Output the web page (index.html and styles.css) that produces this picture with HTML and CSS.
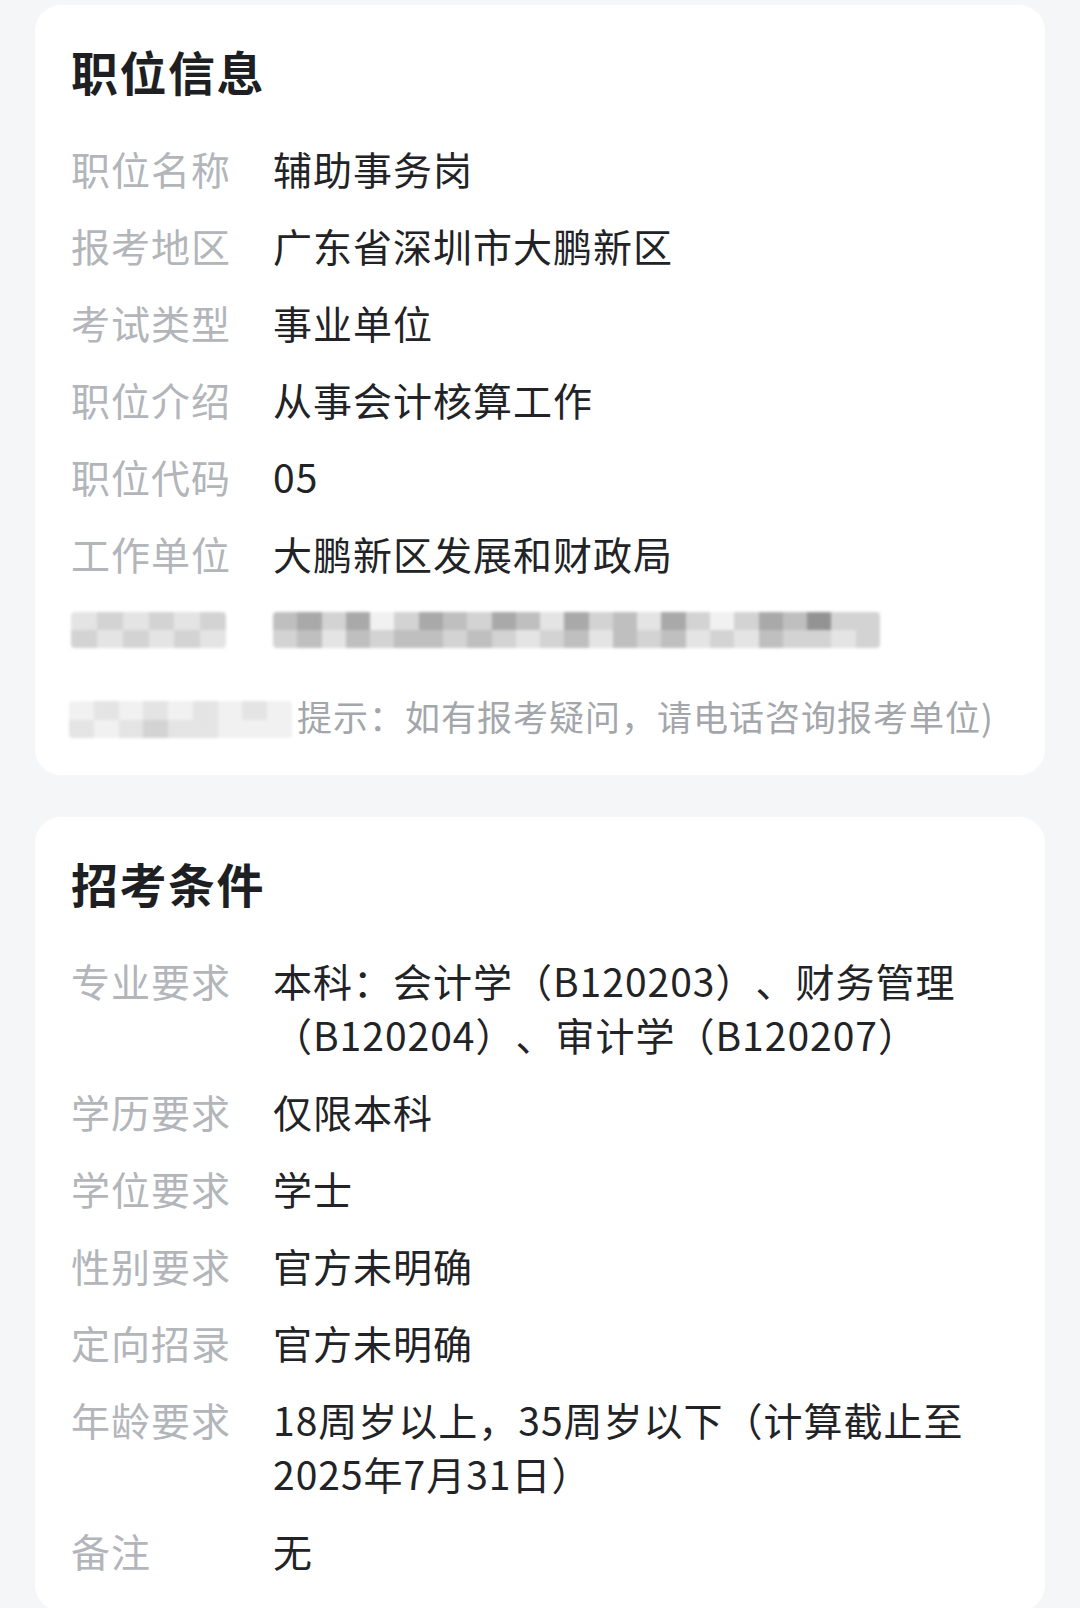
FILE: index.html
```html
<!DOCTYPE html>
<html lang="zh-CN">
<head>
<meta charset="utf-8">
<title>职位信息</title>
<link rel="stylesheet" href="styles.css">
</head>
<body>
<main class="page">
  <section class="card">
    <h2 class="card-title">职位信息</h2>
    <dl class="rows">
      <div class="row"><dt>职位名称</dt><dd>辅助事务岗</dd></div>
      <div class="row"><dt>报考地区</dt><dd>广东省深圳市大鹏新区</dd></div>
      <div class="row"><dt>考试类型</dt><dd>事业单位</dd></div>
      <div class="row"><dt>职位介绍</dt><dd>从事会计核算工作</dd></div>
      <div class="row"><dt>职位代码</dt><dd>05</dd></div>
      <div class="row"><dt>工作单位</dt><dd>大鹏新区发展和财政局</dd></div>
      <div class="row row-blur">
        <dt><div class="mosaic mosaic-label">
          <i class="s2"></i><i class="s3"></i><i class="s2"></i><i class="s3"></i><i class="s2"></i><i class="s3"></i>
          <i class="s3"></i><i class="s2"></i><i class="s3"></i><i class="s2"></i><i class="s3"></i><i class="s2"></i>
        </div></dt>
        <dd><div class="mosaic mosaic-value">
          <i class="s4"></i><i class="s5"></i><i class="s3"></i><i class="s5"></i><i class="s1"></i><i class="s3"></i><i class="s5"></i><i class="s4"></i><i class="s3"></i><i class="s5"></i><i class="s4"></i><i class="s2"></i><i class="s5"></i><i class="s3"></i><i class="s4"></i><i class="s2"></i><i class="s5"></i><i class="s3"></i><i class="s1"></i><i class="s3"></i><i class="s5"></i><i class="s4"></i><i class="s6"></i><i class="s3"></i><i class="s3"></i>
          <i class="s3"></i><i class="s4"></i><i class="s2"></i><i class="s4"></i><i class="s3"></i><i class="s4"></i><i class="s4"></i><i class="s3"></i><i class="s4"></i><i class="s3"></i><i class="s2"></i><i class="s3"></i><i class="s4"></i><i class="s2"></i><i class="s4"></i><i class="s3"></i><i class="s4"></i><i class="s2"></i><i class="s3"></i><i class="s2"></i><i class="s4"></i><i class="s3"></i><i class="s3"></i><i class="s2"></i><i class="s3"></i>
        </div></dd>
      </div>
    </dl>
    <p class="hint"><span class="mosaic mosaic-hint">
      <i class="s1"></i><i class="s2"></i><i class="s1"></i><i class="s2"></i><i class="s1"></i><i class="s2"></i><i class="s1"></i><i class="s2"></i><i class="s1"></i>
      <i class="s2"></i><i class="s1"></i><i class="s2"></i><i class="s3"></i><i class="s2"></i><i class="s2"></i><i class="s1"></i><i class="s1"></i><i class="s1"></i>
    </span>提示：如有报考疑问，请电话咨询报考单位)</p>
  </section>

  <section class="card">
    <h2 class="card-title">招考条件</h2>
    <dl class="rows">
      <div class="row"><dt>专业要求</dt><dd>本科：会计学（B120203）、财务管理（B120204）、审计学（B120207）</dd></div>
      <div class="row"><dt>学历要求</dt><dd>仅限本科</dd></div>
      <div class="row"><dt>学位要求</dt><dd>学士</dd></div>
      <div class="row"><dt>性别要求</dt><dd>官方未明确</dd></div>
      <div class="row"><dt>定向招录</dt><dd>官方未明确</dd></div>
      <div class="row"><dt>年龄要求</dt><dd>18周岁以上，35周岁以下（计算截止至2025年7月31日）</dd></div>
      <div class="row"><dt>备注</dt><dd>无</dd></div>
    </dl>
  </section>
</main>
</body>
</html>
```
FILE: styles.css
```css
* { box-sizing: border-box; }
html, body {
  margin: 0;
  padding: 0;
  background: #f5f6f8;
}
body {
  font-family: "Noto Sans CJK SC", "Noto Sans", sans-serif;
  color: #222326;
  text-spacing-trim: space-all;
}
.page {
  display: flex;
  flex-direction: column;
  gap: 42px;
  padding: 5px 35px 0;
}
.card {
  background: #ffffff;
  border-radius: 26px;
  padding: 36px 35px 34px 36px;
}
.card-title {
  margin: 0 0 40px;
  font-size: 47px;
  line-height: 60px;
  font-weight: 700;
  letter-spacing: 1.5px;
  color: #1e1f22;
}
.rows {
  margin: 0;
  display: flex;
  flex-direction: column;
  gap: 23px;
}
.row {
  display: flex;
  align-items: flex-start;
  font-size: 39px;
  line-height: 54px;
  letter-spacing: 1px;
}
.row dt {
  flex: 0 0 202px;
  color: #b2b5ba;
}
.row dd {
  margin: 0;
  flex: 1;
  color: #222326;
}
.row-blur {
  height: 54px;
  align-items: center;
}
.row-blur dt, .row-blur dd {
  display: flex;
  align-items: center;
}
.mosaic {
  display: grid;
  height: 36px;
  filter: blur(1.4px);
  border-radius: 4px;
  overflow: hidden;
}
.mosaic i { display: block; }
.mosaic-label {
  width: 155px;
  grid-template-columns: repeat(6, 1fr);
}
.mosaic-value {
  width: 607px;
  grid-template-columns: repeat(25, 1fr);
}
.mosaic-hint {
  display: inline-grid;
  width: 223px;
  height: 37px;
  vertical-align: middle;
  grid-template-columns: repeat(9, 1fr);
  margin-right: 5px;
  position: relative;
  top: -2px;
}
.s1 { background: #f1f1f2; }
.s2 { background: #e4e4e5; }
.s3 { background: #d3d3d4; }
.s4 { background: #bfbfc0; }
.s5 { background: #a9a9aa; }
.s6 { background: #939394; }
.hint {
  margin: 34px 0 0 -2px;
  font-size: 35px;
  line-height: 50px;
  letter-spacing: 1px;
  color: #a3a6ab;
  white-space: nowrap;
}
```
